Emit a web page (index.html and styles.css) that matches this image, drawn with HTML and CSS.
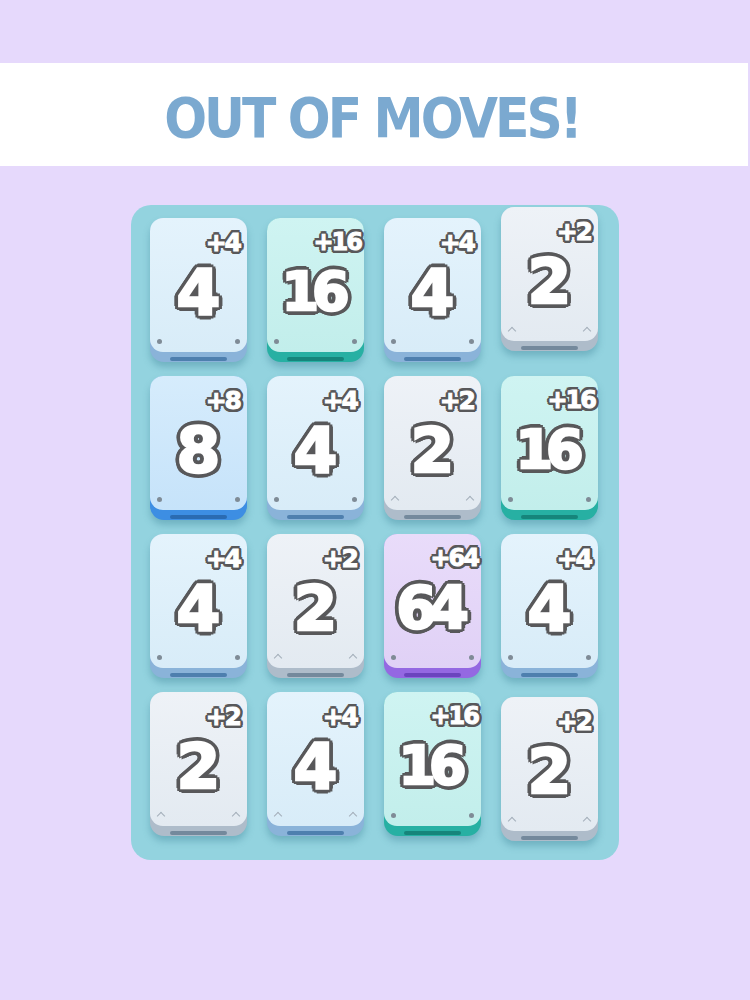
FILE: index.html
```html
<!DOCTYPE html>
<html lang="en">
<head>
    <meta charset="UTF-8">
    <meta name="viewport" content="width=device-width, initial-scale=1.0">
    <title>Out of Moves</title>
    <link rel="stylesheet" href="styles.css">
</head>
<body>
    <div class="banner">
        <h1>OUT OF MOVES!</h1>
    </div>

    <div class="board">
        <!-- row 1 -->
        <div class="tile v4"><div class="face"><span class="num">4</span><span class="gain">+4</span><i class="pin l"></i><i class="pin r"></i></div></div>
        <div class="tile v16"><div class="face"><span class="num">16</span><span class="gain">+16</span><i class="pin l"></i><i class="pin r"></i></div></div>
        <div class="tile v4"><div class="face"><span class="num">4</span><span class="gain">+4</span><i class="pin l"></i><i class="pin r"></i></div></div>
        <div class="tile v2 up"><div class="face"><span class="num">2</span><span class="gain">+2</span><i class="hook l"></i><i class="hook r"></i></div></div>
        <!-- row 2 -->
        <div class="tile v8"><div class="face"><span class="num">8</span><span class="gain">+8</span><i class="pin l"></i><i class="pin r"></i></div></div>
        <div class="tile v4"><div class="face"><span class="num">4</span><span class="gain">+4</span><i class="pin l"></i><i class="pin r"></i></div></div>
        <div class="tile v2"><div class="face"><span class="num">2</span><span class="gain">+2</span><i class="hook l"></i><i class="hook r"></i></div></div>
        <div class="tile v16"><div class="face"><span class="num">16</span><span class="gain">+16</span><i class="pin l"></i><i class="pin r"></i></div></div>
        <!-- row 3 -->
        <div class="tile v4"><div class="face"><span class="num">4</span><span class="gain">+4</span><i class="pin l"></i><i class="pin r"></i></div></div>
        <div class="tile v2"><div class="face"><span class="num">2</span><span class="gain">+2</span><i class="hook l"></i><i class="hook r"></i></div></div>
        <div class="tile v64"><div class="face"><span class="num">64</span><span class="gain">+64</span><i class="pin l"></i><i class="pin r"></i></div></div>
        <div class="tile v4"><div class="face"><span class="num">4</span><span class="gain">+4</span><i class="pin l"></i><i class="pin r"></i></div></div>
        <!-- row 4 -->
        <div class="tile v2"><div class="face"><span class="num">2</span><span class="gain">+2</span><i class="hook l"></i><i class="hook r"></i></div></div>
        <div class="tile v4"><div class="face"><span class="num">4</span><span class="gain">+4</span><i class="hook l"></i><i class="hook r"></i></div></div>
        <div class="tile v16"><div class="face"><span class="num">16</span><span class="gain">+16</span><i class="pin l"></i><i class="pin r"></i></div></div>
        <div class="tile v2 down"><div class="face"><span class="num">2</span><span class="gain">+2</span><i class="hook l"></i><i class="hook r"></i></div></div>
    </div>
</body>
</html>
```

FILE: styles.css
```css
body {
    margin: 0;
    height: 1000px;
    background-color: #E6D9FC;
    font-family: "DejaVu Sans", sans-serif;
    padding-top: 63px;
    box-sizing: border-box;
}

.banner {
    background-color: #FFFFFF;
    width: 748px;
    height: 103px;
    display: flex;
    justify-content: center;
    align-items: center;
}
.banner h1 {
    margin: 0;
    font-family: "DejaVu Sans Condensed", "DejaVu Sans", sans-serif;
    font-stretch: condensed;
    font-weight: bold;
    font-size: 56px;
    color: #7BA9D0;
    letter-spacing: -3px;
    padding-top: 6px;
    padding-right: 4px;
}

.board {
    margin: 39px 0 0 131px;
    width: 488px;
    box-sizing: border-box;
    padding: 13px 20px 24px 19px;
    background-color: #93D3DF;
    border-radius: 20px;
    display: grid;
    grid-template-columns: repeat(4, 97px);
    column-gap: 20px;
    row-gap: 14px;
}

.tile {
    position: relative;
    height: 144px;
    border-radius: 14px;
    box-sizing: border-box;
    padding-bottom: 10px;
    box-shadow: 0 5px 7px rgba(60, 130, 150, 0.4);
}
.tile::after {
    content: "";
    position: absolute;
    left: 20px;
    right: 20px;
    bottom: 1px;
    height: 4px;
    border-radius: 2px;
    background-color: var(--slot);
}
.tile.up { transform: translateY(-11px); }
.tile.down { transform: translateY(5px); }

.face {
    position: relative;
    height: 100%;
    border-radius: 13px;
    display: flex;
    justify-content: center;
    align-items: center;
    padding-top: 14px;
    box-sizing: border-box;
}

/* colours per value */
.v2  { background-color: #AEBCCA; --slot: #74899C; }
.v2 .face  { background: linear-gradient(#EEF2F7, #E3EAF1); }
.v4  { background-color: #8AB3D9; --slot: #4E7FAE; }
.v4 .face  { background: linear-gradient(#E4F3FC, #D8ECF8); }
.v8  { background-color: #3D8EE3; --slot: #2A6BB2; }
.v8 .face  { background: linear-gradient(#D6ECFC, #C6E3FA); }
.v16 { background-color: #27B0A3; --slot: #16857B; }
.v16 .face { background: linear-gradient(#CFF4F2, #C2EEEB); }
.v64 { background-color: #9468E2; --slot: #6B44BE; }
.v64 .face { background: linear-gradient(#E9DCFA, #E0D1F6); }

/* white digits with a thick grey outline drawn by shadows */
.num {
    font-weight: bold;
    font-size: 63px;
    line-height: 1;
    color: #FFFFFF;
    letter-spacing: -8px;
    margin-left: -8px;
    -webkit-text-stroke: 2.5px #FFFFFF;
    text-shadow:
        5px 0 0 #58585A, 4.3px 2.5px 0 #58585A, 2.5px 4.3px 0 #58585A,
        0 5px 0 #58585A, -2.5px 4.3px 0 #58585A, -4.3px 2.5px 0 #58585A,
        -5px 0 0 #58585A, -4.3px -2.5px 0 #58585A, -2.5px -4.3px 0 #58585A,
        0 -5px 0 #58585A, 2.5px -4.3px 0 #58585A, 4.3px -2.5px 0 #58585A,
        3px 0 0 #58585A, -3px 0 0 #58585A, 0 3px 0 #58585A, 0 -3px 0 #58585A;
}
.v16 .num { font-size: 54px; letter-spacing: -7px; margin-left: -7px; }
.v64 .num { font-size: 58px; }

.gain {
    position: absolute;
    top: 12px;
    right: 7px;
    font-weight: bold;
    font-size: 25px;
    line-height: 1;
    color: #FFFFFF;
    letter-spacing: -2px;
    -webkit-text-stroke: 1px #FFFFFF;
    text-shadow:
        3px 0 0 #58585A, 2.6px 1.5px 0 #58585A, 1.5px 2.6px 0 #58585A,
        0 3px 0 #58585A, -1.5px 2.6px 0 #58585A, -2.6px 1.5px 0 #58585A,
        -3px 0 0 #58585A, -2.6px -1.5px 0 #58585A, -1.5px -2.6px 0 #58585A,
        0 -3px 0 #58585A, 1.5px -2.6px 0 #58585A, 2.6px -1.5px 0 #58585A;
}
.v16 .gain, .v64 .gain { right: 3px; font-size: 24px; }

.pin {
    position: absolute;
    bottom: 8px;
    width: 5px;
    height: 5px;
    border-radius: 50%;
    background-color: #7F8B96;
}
.pin.l { left: 7px; }
.pin.r { right: 7px; }

.hook {
    position: absolute;
    bottom: 7px;
    width: 5px;
    height: 5px;
    border-left: 1.5px solid #A4AFBA;
    border-top: 1.5px solid #A4AFBA;
    transform: rotate(45deg);
}
.hook.l { left: 8px; }
.hook.r { right: 8px; }
```
